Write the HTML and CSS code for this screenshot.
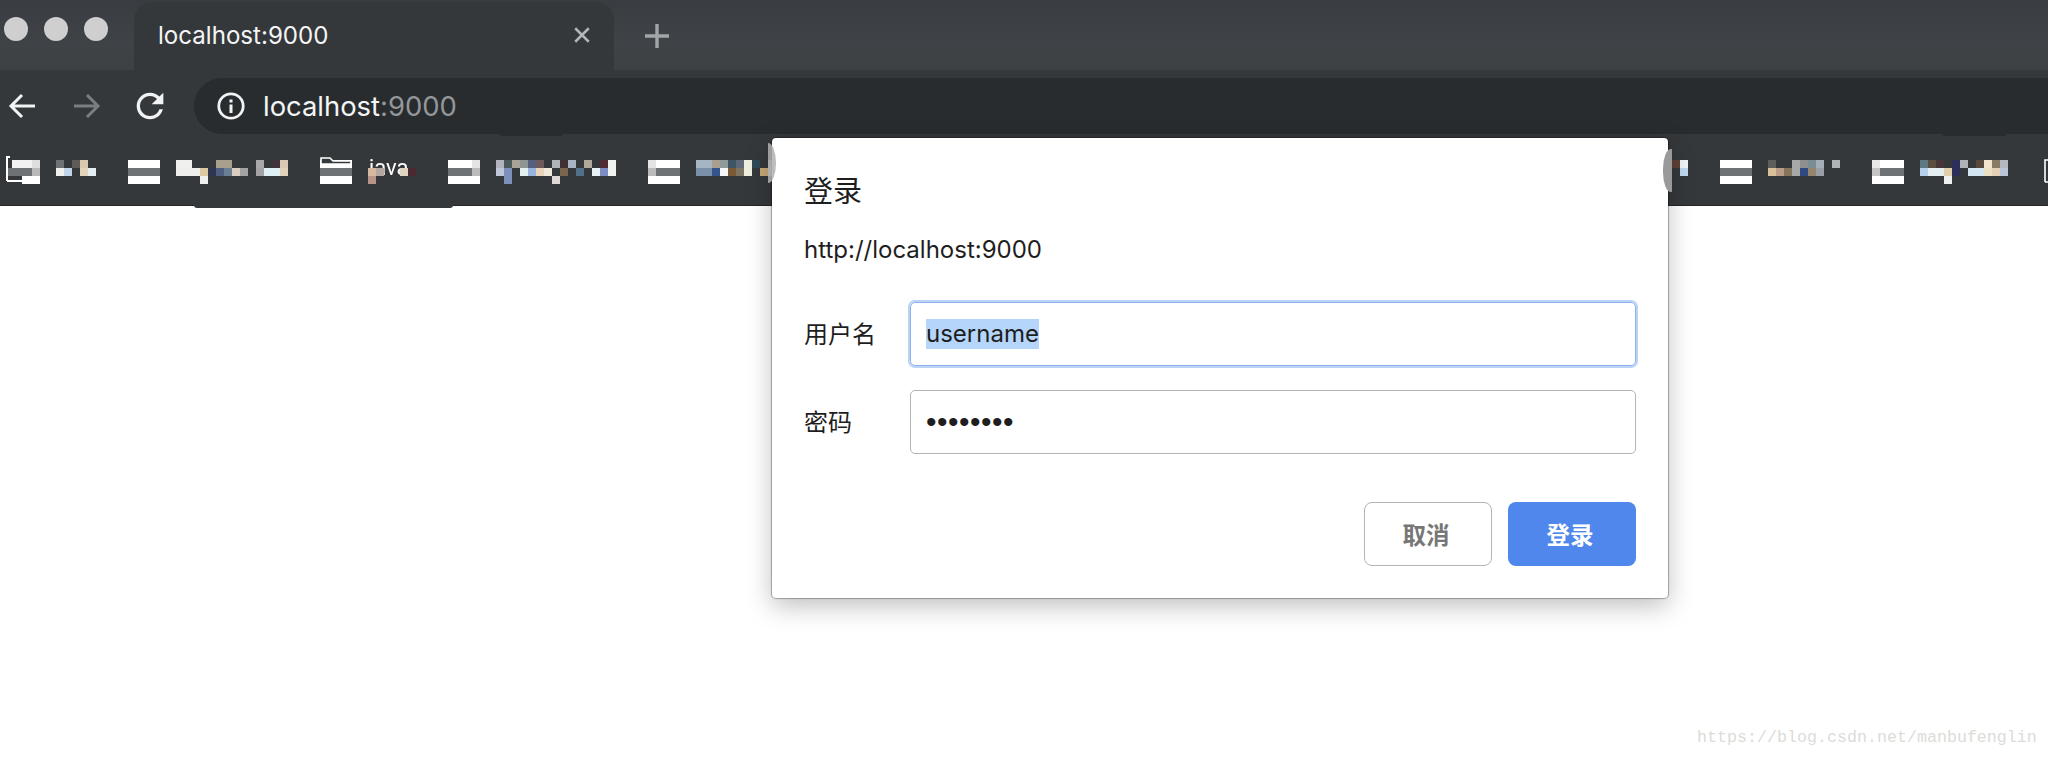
FILE: index.html
```html
<!DOCTYPE html>
<html lang="zh">
<head>
<meta charset="utf-8">
<title>localhost:9000</title>
<link rel="stylesheet" href="styles.css">
</head>
<body>
<header class="browser">
  <div class="tabstrip">
    <div class="lights"><i class="light"></i><i class="light"></i><i class="light"></i></div>
    <div class="tab">
      <span class="tab-title">localhost:9000</span>
      <svg class="tab-close" width="18" height="18" viewBox="0 0 16 16"><path d="M2 2l12 12M14 2L2 14" fill="none" stroke="#b4b7b9" stroke-width="2.2"/></svg>
    </div>
    <svg class="tab-new" width="24" height="24" viewBox="0 0 24 24"><path d="M12 0v24M0 12h24" fill="none" stroke="#a3a6a9" stroke-width="3.4"/></svg>
  </div>
  <div class="toolbar">
    <div class="nav">
      <svg class="nav-back" width="28" height="26" viewBox="0 0 28 26"><path d="M27 13H3M14 2L3 13l11 11" fill="none" stroke="#f1f3f4" stroke-width="3"/></svg>
      <svg class="nav-forward" width="28" height="26" viewBox="0 0 28 26"><path d="M1 13h24M14 2l11 11-11 11" fill="none" stroke="#7b7e81" stroke-width="3"/></svg>
      <svg class="nav-reload" width="40" height="40" viewBox="0 0 24 24"><path fill="#f1f3f4" d="M17.65 6.35A7.958 7.958 0 0 0 12 4c-4.42 0-7.99 3.58-7.99 8s3.57 8 7.99 8c3.73 0 6.84-2.55 7.73-6h-2.08A5.99 5.99 0 0 1 12 18c-3.31 0-6-2.69-6-6s2.69-6 6-6c1.66 0 3.14.69 4.22 1.78L13 11h7V4l-2.35 2.35z"/></svg>
    </div>
    <div class="urlbar">
      <svg class="url-info" width="28" height="28" viewBox="0 0 28 28"><circle cx="14" cy="14" r="12.2" fill="none" stroke="#f1f3f4" stroke-width="2.8"/><rect x="12.5" y="12.5" width="3" height="8.5" fill="#f1f3f4"/><rect x="12.5" y="7.5" width="3" height="3" fill="#f1f3f4"/></svg>
      <span class="url-text">localhost<span class="url-dim">:9000</span></span>
    </div>
  </div>
  <nav class="bookmarks">
    <div class="bm-group">
      <div class="bm">
        <svg class="bm-icon" width="32" height="24" viewBox="0 0 32 24" shape-rendering="crispEdges"><rect x="4" width="20" height="8" fill="#f2f2f2"/><rect x="24" width="8" height="8" fill="#dedede"/><rect y="8" width="24" height="8" fill="#6f7274"/><rect x="24" y="8" width="8" height="8" fill="#b9b9b9"/><rect x="14" y="16" width="18" height="8" fill="#fff"/><path d="M-1 21V-3h3M-1 21H16" fill="none" stroke="#fff" stroke-width="2"/></svg>
        <svg class="bm-label" width="40" height="24" viewBox="0 0 40 24" shape-rendering="crispEdges"><rect width="8" height="8" fill="#6e7175"/><rect x="16" width="8" height="8" fill="#5f5c58"/><rect x="24" width="8" height="8" fill="#d8c8ae"/><rect y="8" width="8" height="8" fill="#f0f0ee"/><rect x="8" y="8" width="8" height="8" fill="#c0d4ea"/><rect x="24" y="8" width="8" height="8" fill="#e3d4ba"/><rect x="32" y="8" width="8" height="8" fill="#e4eef2"/></svg>
      </div>
      <div class="bm">
        <svg class="bm-icon" width="32" height="24" viewBox="0 0 32 24" shape-rendering="crispEdges"><rect width="32" height="8" fill="#fff"/><rect y="8" width="32" height="8" fill="#6f7274"/><rect y="16" width="32" height="8" fill="#fff"/></svg>
        <svg class="bm-label" width="112" height="24" viewBox="0 0 112 24" shape-rendering="crispEdges"><rect width="16" height="8" fill="#f0f1ef"/><rect x="40" width="16" height="8" fill="#a89f8f"/><rect x="80" width="8" height="8" fill="#a8a8aa"/><rect x="96" width="8" height="8" fill="#40343a"/><rect x="104" width="8" height="8" fill="#d9c9b4"/><rect y="8" width="24" height="8" fill="#eeeeec"/><rect x="24" y="8" width="8" height="8" fill="#dcc9a0"/><rect x="32" y="8" width="8" height="8" fill="#2f3550"/><rect x="40" y="8" width="8" height="8" fill="#4d5e7e"/><rect x="48" y="8" width="8" height="8" fill="#6b7f94"/><rect x="56" y="8" width="8" height="8" fill="#d9cdc0"/><rect x="64" y="8" width="8" height="8" fill="#a3a3a3"/><rect x="80" y="8" width="8" height="8" fill="#a3a3a5"/><rect x="88" y="8" width="16" height="8" fill="#dff0f4"/><rect x="104" y="8" width="8" height="8" fill="#e2d2ba"/><rect x="24" y="16" width="8" height="8" fill="#eef0f0"/></svg>
      </div>
      <div class="bm">
        <svg class="bm-icon" width="32" height="24" viewBox="0 0 32 24" shape-rendering="crispEdges"><rect width="32" height="8" fill="#fff"/><rect y="8" width="32" height="8" fill="#6f7274"/><rect y="16" width="32" height="8" fill="#fff"/><path d="M1 0V-2H10L13 1H31V4H1z" fill="#35383b" stroke="#fff" stroke-width="1.6" shape-rendering="auto"/></svg>
        <svg class="bm-label" width="48" height="24" viewBox="0 0 48 24"><text class="bm-text" x="1" y="15">java</text><g shape-rendering="crispEdges"><rect y="8" width="8" height="8" fill="#d8b8a0"/><rect y="16" width="8" height="8" fill="#b89488"/><rect x="8" y="8" width="8" height="8" fill="#b5a8a2"/><rect x="32" y="8" width="8" height="8" fill="#ded4c0"/><rect x="40" y="8" width="8" height="8" fill="#4a2a30"/></g></svg>
      </div>
      <div class="bm">
        <svg class="bm-icon" width="32" height="24" viewBox="0 0 32 24" shape-rendering="crispEdges"><rect width="32" height="8" fill="#fff"/><rect x="24" width="8" height="8" fill="#e4e4e4"/><rect y="8" width="24" height="8" fill="#6f7274"/><rect x="24" y="8" width="8" height="8" fill="#bbb"/><rect y="16" width="32" height="8" fill="#fff"/></svg>
        <svg class="bm-label" width="120" height="24" viewBox="0 0 120 24" shape-rendering="crispEdges"><rect width="8" height="8" fill="#b3b3c0"/><rect x="8" width="8" height="8" fill="#485a5a"/><rect x="16" width="8" height="8" fill="#a8a297"/><rect x="24" width="8" height="8" fill="#8e9694"/><rect x="32" width="8" height="8" fill="#56607e"/><rect x="40" width="8" height="8" fill="#6e5a5a"/><rect x="56" width="8" height="8" fill="#b0b4b8"/><rect x="64" width="8" height="8" fill="#3f3036"/><rect x="72" width="8" height="8" fill="#a8b4c4"/><rect x="88" width="8" height="8" fill="#b0a898"/><rect x="104" width="8" height="8" fill="#512c35"/><rect x="112" width="8" height="8" fill="#f0f2f0"/><rect y="8" width="8" height="8" fill="#c0c6da"/><rect x="8" y="8" width="8" height="8" fill="#7d90bb"/><rect x="24" y="8" width="8" height="8" fill="#e4f0f0"/><rect x="32" y="8" width="8" height="8" fill="#98b4de"/><rect x="40" y="8" width="8" height="8" fill="#e8d4b8"/><rect x="48" y="8" width="8" height="8" fill="#f0e8d8"/><rect x="64" y="8" width="8" height="8" fill="#7c654c"/><rect x="80" y="8" width="8" height="8" fill="#51708a"/><rect x="96" y="8" width="8" height="8" fill="#e8f2f4"/><rect x="104" y="8" width="8" height="8" fill="#7c8cc4"/><rect x="112" y="8" width="8" height="8" fill="#f0f2f0"/><rect x="8" y="16" width="8" height="8" fill="#7d90bb"/><rect x="56" y="16" width="8" height="8" fill="#e0d8d4"/></svg>
      </div>
      <div class="bm">
        <svg class="bm-icon" width="32" height="24" viewBox="0 0 32 24" shape-rendering="crispEdges"><rect width="32" height="8" fill="#fff"/><rect width="8" height="8" fill="#e4e4e4"/><rect x="8" y="8" width="24" height="8" fill="#6f7274"/><rect y="8" width="8" height="8" fill="#bbb"/><rect y="16" width="32" height="8" fill="#fff"/></svg>
        <svg class="bm-label" width="80" height="24" viewBox="0 0 80 24" shape-rendering="crispEdges"><rect width="16" height="8" fill="#a5b5c4"/><rect x="16" width="8" height="8" fill="#a89f90"/><rect x="24" width="8" height="8" fill="#909a98"/><rect x="32" width="8" height="8" fill="#3d5565"/><rect x="40" width="8" height="8" fill="#5e6878"/><rect x="48" width="8" height="8" fill="#eeeee0"/><rect x="56" width="8" height="8" fill="#2f4858"/><rect x="72" width="8" height="8" fill="#a5a5a5"/><rect y="8" width="16" height="8" fill="#7a90a8"/><rect x="16" y="8" width="8" height="8" fill="#33548c"/><rect x="24" y="8" width="8" height="8" fill="#f4f8f8"/><rect x="32" y="8" width="8" height="8" fill="#7a5a35"/><rect x="40" y="8" width="8" height="8" fill="#7e7464"/><rect x="48" y="8" width="8" height="8" fill="#eeeee0"/><rect x="64" y="8" width="8" height="8" fill="#c8a878"/><rect x="72" y="8" width="8" height="8" fill="#b8b4a8"/></svg>
      </div>
    </div>
    <div class="bm-group">
      <div class="bm">
        <svg class="bm-label" width="16" height="24" viewBox="0 0 16 24" shape-rendering="crispEdges"><rect width="8" height="8" fill="#5c4035"/><rect x="8" width="8" height="8" fill="#f0f4f8"/><rect x="8" y="8" width="8" height="8" fill="#c0daf0"/></svg>
      </div>
      <div class="bm">
        <svg class="bm-icon" width="32" height="24" viewBox="0 0 32 24" shape-rendering="crispEdges"><rect width="32" height="8" fill="#fff"/><rect y="8" width="32" height="8" fill="#6f7274"/><rect y="16" width="32" height="8" fill="#fff"/></svg>
        <svg class="bm-label" width="72" height="24" viewBox="0 0 72 24" shape-rendering="crispEdges"><rect width="8" height="8" fill="#5e5e5c"/><rect x="24" width="8" height="8" fill="#a8a8aa"/><rect x="32" width="8" height="8" fill="#8f8f90"/><rect x="40" width="8" height="8" fill="#7a8c94"/><rect x="48" width="8" height="8" fill="#a4adb8"/><rect x="64" width="8" height="8" fill="#b0b4b8"/><rect y="8" width="8" height="8" fill="#d8c098"/><rect x="8" y="8" width="8" height="8" fill="#bc9c88"/><rect x="16" y="8" width="8" height="8" fill="#86755e"/><rect x="24" y="8" width="8" height="8" fill="#a8a8a8"/><rect x="32" y="8" width="8" height="8" fill="#2f4a80"/><rect x="40" y="8" width="8" height="8" fill="#94866e"/><rect x="48" y="8" width="8" height="8" fill="#9a9ea6"/></svg>
      </div>
      <div class="bm">
        <svg class="bm-icon" width="32" height="24" viewBox="0 0 32 24" shape-rendering="crispEdges"><rect width="32" height="8" fill="#fff"/><rect width="8" height="8" fill="#e8e8e8"/><rect x="8" y="8" width="24" height="8" fill="#6f7274"/><rect y="8" width="8" height="8" fill="#c4c4c4"/><rect y="16" width="32" height="8" fill="#fff"/></svg>
        <svg class="bm-label" width="88" height="24" viewBox="0 0 88 24" shape-rendering="crispEdges"><rect width="8" height="8" fill="#5e7884"/><rect x="8" width="8" height="8" fill="#5c4e3c"/><rect x="16" width="8" height="8" fill="#48353a"/><rect x="32" width="8" height="8" fill="#2c2f5a"/><rect x="40" width="8" height="8" fill="#b0b4b8"/><rect x="56" width="8" height="8" fill="#58483c"/><rect x="64" width="8" height="8" fill="#f0e4cc"/><rect x="72" width="8" height="8" fill="#887a64"/><rect x="80" width="8" height="8" fill="#b4b8c0"/><rect y="8" width="8" height="8" fill="#b4d0ea"/><rect x="8" y="8" width="16" height="8" fill="#e4eef2"/><rect x="24" y="8" width="8" height="8" fill="#e0cfa8"/><rect x="32" y="8" width="8" height="8" fill="#2c2f5a"/><rect x="48" y="8" width="16" height="8" fill="#d4e6f2"/><rect x="64" y="8" width="8" height="8" fill="#ece0c4"/><rect x="72" y="8" width="8" height="8" fill="#e4d0b8"/><rect x="80" y="8" width="8" height="8" fill="#bcc6d8"/><rect x="24" y="16" width="8" height="8" fill="#eef0f0"/></svg>
      </div>
      <div class="bm">
        <svg class="bm-icon" width="8" height="24" viewBox="0 0 8 24"><path d="M5 22V0H8M5 22H8" fill="none" stroke="#fff" stroke-width="1.6"/></svg>
      </div>
    </div>
  </nav>
</header>
<i class="bump bump-bar"></i>
<i class="bump bump-url-a"></i>
<i class="bump bump-url-b"></i>
<i class="popup-edge popup-edge-left"></i>
<section class="dialog">
  <h1 class="dialog-title">登录</h1>
  <p class="dialog-url">http://localhost:9000</p>
  <div class="field field-user">
    <span class="field-label">用户名</span>
    <div class="input input-focus"><span class="selected">username</span></div>
  </div>
  <div class="field field-pass">
    <span class="field-label">密码</span>
    <div class="input input-plain"><span class="dots">••••••••</span></div>
  </div>
  <div class="actions">
    <button class="btn btn-cancel">取消</button>
    <button class="btn btn-login">登录</button>
  </div>
</section>
<i class="popup-edge popup-edge-right"></i>
<div class="watermark">https://blog.csdn.net/manbufenglin</div>
</body>
</html>
```
FILE: styles.css
```css
* { box-sizing: border-box; }
html, body { margin: 0; padding: 0; }
body {
  width: 2048px;
  height: 758px;
  overflow: hidden;
  background: #fff;
  position: relative;
  font-family: Inter, "Noto Sans CJK SC", sans-serif;
}
.browser { display: flex; flex-direction: column; }
.tabstrip {
  height: 70px;
  background: linear-gradient(#393c40, #3f4347 60%, #3d4144);
  display: flex;
  align-items: flex-end;
}
.lights { width: 134px; height: 70px; padding: 17px 0 0 4px; display: flex; gap: 16px; }
.light { width: 24px; height: 24px; border-radius: 50%; background: #cfcfcf; }
.tab {
  width: 480px;
  height: 68px;
  background: #35383b;
  border-radius: 18px 18px 0 0;
  display: flex;
  align-items: center;
  justify-content: space-between;
  padding: 0 23px 0 24px;
  position: relative;
}
.tab-title { color: #f4f5f6; font-size: 24.1px; margin-bottom: 2px; }
.tab-close { margin-bottom: 2px; }
.tab-new { margin: 0 0 22px 31px; }
.toolbar { height: 64px; background: #35383b; display: flex; }
.nav { width: 194px; position: relative; display: flex; align-items: center; padding: 8px 0 0 8px; }
.nav-forward { margin-left: 37px; }
.nav-reload { margin-left: 29px; }
.urlbar {
  flex: 1;
  margin-top: 8px;
  background: #292c2f;
  border-radius: 28px 0 0 28px;
  display: flex;
  align-items: center;
  padding-left: 23px;
}
.url-text { margin-left: 18px; color: #f4f5f6; font-size: 27.4px; }
.url-dim { color: #94979a; }
.bookmarks {
  height: 72px;
  background: #35383b;
  border-bottom: 1px solid #222426;
  display: flex;
  justify-content: space-between;
  overflow: hidden;
  padding: 26px 0 0 8px;
}
.bm-group { display: flex; gap: 32px; filter: blur(0.3px); }
.bm { display: flex; gap: 16px; align-items: flex-start; }
.bm svg { overflow: visible; display: block; }
.bm-text { fill: #fff; font-family: Roboto, sans-serif; font-size: 22px; }
.bump { position: absolute; display: block; }
.bump-bar { left: 194px; top: 205px; width: 259px; height: 3px; background: #35383b; border-radius: 0 0 8px 8px; }
.bump-url-a { left: 500px; top: 134px; width: 62px; height: 2px; background: #292c2f; }
.bump-url-b { left: 1943px; top: 134px; width: 63px; height: 2px; background: #292c2f; }
.popup-edge { position: absolute; display: block; z-index: 2; }
.popup-edge-left { left: 768px; top: 143px; width: 8px; height: 40px; background: rgba(176,176,176,.85); border-radius: 0 8px 8px 0 / 0 20px 20px 0; }
.popup-edge-right { left: 1663px; top: 149px; width: 9px; height: 43px; background: #9a9a9a; border-radius: 8px 0 0 8px / 20px 0 0 20px; }
.dialog {
  position: absolute;
  left: 772px;
  top: 138px;
  width: 896px;
  height: 460px;
  background: #fff;
  border-radius: 4px;
  padding: 34px 32px 32px 32px;
  box-shadow: 0 0 1px 1px rgba(0,0,0,.3), 0 8px 26px rgba(0,0,0,.25);
  display: flex;
  flex-direction: column;
  color: #1e1e1e;
  z-index: 1;
}
.dialog-title { margin: 0; font-size: 29px; line-height: 40px; font-weight: 400; }
.dialog-url { margin: 23px 0 0; font-size: 24px; line-height: 30px; }
.field { display: flex; align-items: center; }
.field-user { margin-top: 37px; }
.field-pass { margin-top: 24px; }
.field-label { width: 106px; font-size: 24px; padding-bottom: 4px; }
.input { flex: 1; display: flex; align-items: center; padding-left: 15px; font-size: 24px; border-radius: 5px; }
.input-focus { height: 64px; border: 1.5px solid #8db2ec; box-shadow: 0 0 0 2px #bcd3f6; }
.input-plain { height: 64px; border: 1.5px solid #b4b4b4; }
.selected { background: #b5d5fb; line-height: 30px; }
.dots { font: 30px/30px "Liberation Sans", sans-serif; letter-spacing: .5px; }
.actions { margin-top: 48px; display: flex; justify-content: flex-end; gap: 16px; }
.btn { width: 128px; height: 64px; border-radius: 8px; font: 700 23.5px Inter, "Noto Sans CJK SC", sans-serif; padding: 0; }
.btn-cancel { background: #fff; border: 1.5px solid #b4b4b4; color: #777; padding-right: 4px; }
.btn-login { background: #5087ec; border: 0; color: #fff; padding-right: 4px; }
.watermark {
  position: absolute;
  left: 1697px;
  top: 728px;
  font: 16.67px/20px "Liberation Mono", monospace;
  color: #dcdcd8;
}
```
